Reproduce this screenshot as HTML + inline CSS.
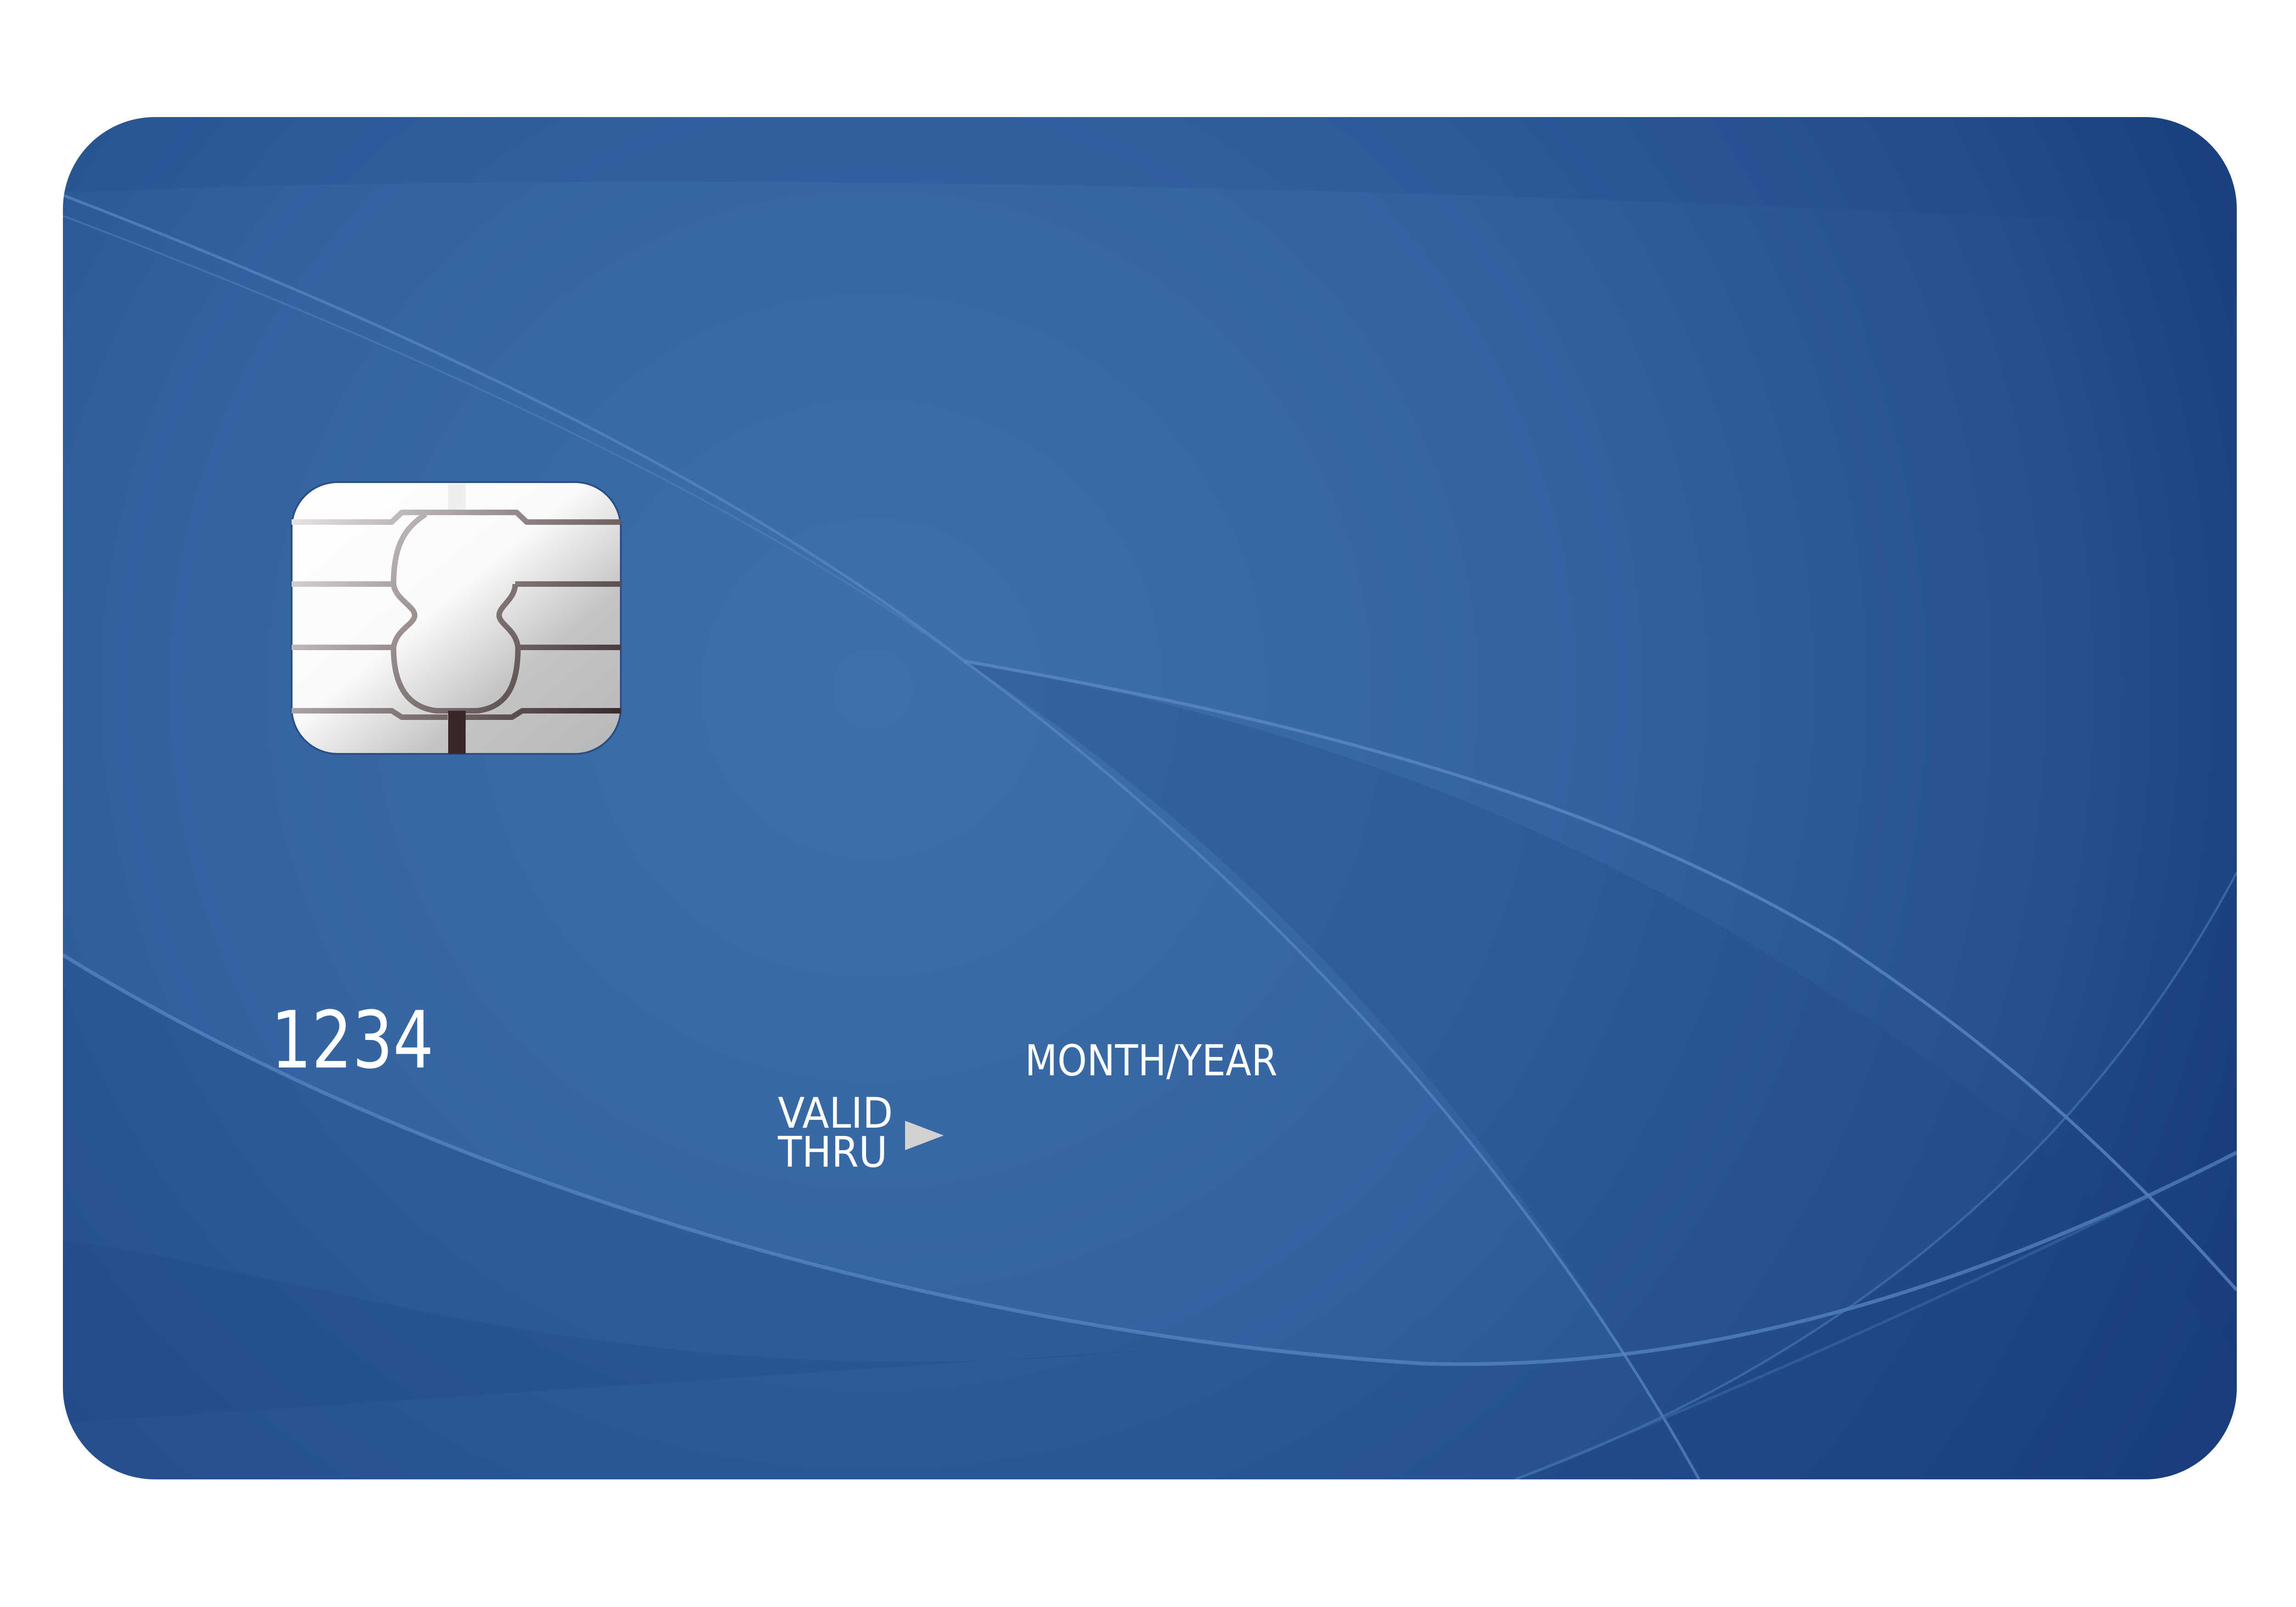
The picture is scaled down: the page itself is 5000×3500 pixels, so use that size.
<!DOCTYPE html>
<html><head><meta charset="utf-8"><style>
html,body{margin:0;padding:0;background:#fff;}
body{width:5000px;height:3500px;position:relative;overflow:hidden;}
svg{position:absolute;left:0;top:0;}
.t{position:absolute;color:#fff;font-family:"DejaVu Sans","Liberation Sans",sans-serif;white-space:nowrap;line-height:1;transform-origin:0 0;}
</style></head><body>
<svg width="5000" height="3500" viewBox="0 0 5000 3500">
<defs>
<clipPath id="card"><rect x="137" y="255" width="4734" height="2967" rx="200" ry="200"/></clipPath>
<radialGradient id="bg" cx="1900" cy="1500" r="3300" gradientUnits="userSpaceOnUse">
<stop offset="0" stop-color="#3f70ad"/><stop offset="0.45" stop-color="#3563a2"/><stop offset="0.8" stop-color="#264f8f"/><stop offset="1" stop-color="#143a78"/></radialGradient>
<linearGradient id="chipfill" x1="0" y1="0" x2="1" y2="1"><stop offset="0" stop-color="#ffffff"/><stop offset="0.45" stop-color="#fafafa"/><stop offset="0.7" stop-color="#c4c4c4"/><stop offset="1" stop-color="#b8b8b8"/></linearGradient>
<linearGradient id="chipline" gradientUnits="userSpaceOnUse" x1="0" y1="0" x2="717" y2="592"><stop offset="0" stop-color="#f2f0f0"/><stop offset="0.5" stop-color="#8a7f80"/><stop offset="1" stop-color="#2e1e1e"/></linearGradient>
</defs>
<g clip-path="url(#card)">
<rect x="0" y="0" width="5000" height="3500" fill="url(#bg)"/>
<path d="M137 255 L4871 255 L4871 500 C3500 420 1500 360 137 420 Z" fill="#1c4585" opacity="0.2"/>
<path d="M2100 1440 C3000 1600 3700 1900 4450 2500 L4871 2950 L4871 3222 L3700 3222 C3300 2500 2800 1900 2100 1440 Z" fill="#1f4886" opacity="0.28"/>
<path d="M4871 1900 C4500 2600 3900 3000 3300 3222 L4871 3222 Z" fill="#163d7c" opacity="0.3"/>
<path d="M137 2080 C900 2550 2000 2900 3100 2970 C3800 2990 4400 2750 4871 2510 L4871 3222 L137 3222 Z" fill="#1d4585" opacity="0.3"/>
<path d="M137 2700 C700 2780 1400 3050 2500 2940 L137 3100 Z" fill="#173f7f" opacity="0.2"/>
<path d="M137 425 C900 720 1600 1050 2100 1440 C2700 1880 3300 2500 3700 3222" stroke="#5a88c4" stroke-width="6" fill="none" opacity="0.7"/>
<path d="M137 470 C900 760 1600 1080 2100 1440" stroke="#5583be" stroke-width="4" fill="none" opacity="0.5"/>
<path d="M2100 1440 C2900 1580 3500 1750 4000 2050 C4300 2250 4550 2450 4871 2810" stroke="#5d8ac6" stroke-width="7" fill="none" opacity="0.75"/>
<path d="M137 2080 C900 2550 2000 2900 3100 2970 C3800 2990 4400 2750 4871 2510" stroke="#5a88c4" stroke-width="8" fill="none" opacity="0.7"/>
<path d="M4871 1900 C4500 2600 3900 3000 3300 3222" stroke="#4a79b8" stroke-width="5" fill="none" opacity="0.6"/>
<path d="M3300 3222 C3800 3020 4300 2800 4871 2510" stroke="#3e6eae" stroke-width="6" fill="none" opacity="0.5"/>
</g>
<g transform="translate(635,1050)">
<rect x="0" y="0" width="717" height="592" rx="100" ry="100" fill="url(#chipfill)" stroke="#2a4f86" stroke-width="4"/>
<rect x="341" y="4" width="38" height="62" fill="#eeeeee"/>
<g stroke="url(#chipline)" stroke-width="12" fill="none" stroke-linejoin="round">
<path d="M0 87 L218 87 L240 66 L490 66 L512 87 L717 87"/>
<path d="M292 70 C245 100 222 140 222 222 C225 255 268 270 268 290 C268 310 228 320 222 360 C222 440 250 490 315 498 L405 498 C470 490 493 440 493 360 C488 320 452 310 452 290 C452 270 487 255 487 222"/>
<path d="M0 222 L222 222 M487 222 L717 222"/>
<path d="M0 360 L222 360 M493 360 L717 360"/>
<path d="M0 498 L218 498 L240 512 L340 512 M378 512 L480 512 L502 498 L717 498"/>
</g>
<rect x="341" y="498" width="38" height="94" fill="#3a2828"/>
</g>
<polygon points="1971,2441 2055,2473 1971,2505" fill="#d2d2d2"/>
</svg>
<div class="t" style="left:590px;top:2180px;font-size:172px;transform:scaleX(0.81);">1234</div>
<div class="t" style="left:2232px;top:2264px;font-size:93px;transform:scaleX(0.88);">MONTH/YEAR</div>
<div class="t" style="left:1694px;top:2379px;font-size:92px;transform:scaleX(0.93);">VALID</div>
<div class="t" style="left:1694px;top:2464px;font-size:92px;transform:scaleX(0.93);">THRU</div>
</body></html>
